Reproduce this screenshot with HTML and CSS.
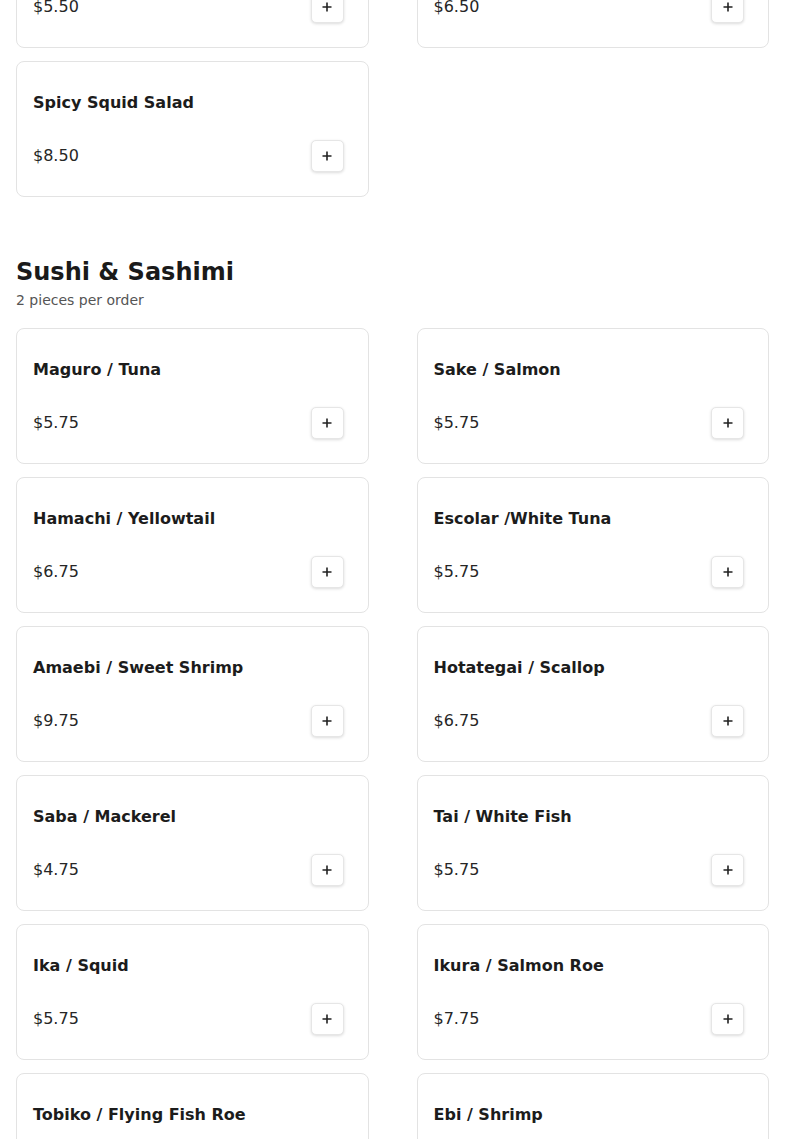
FILE: index.html
```html
<!DOCTYPE html>
<html>
<head>
<meta charset="utf-8">
<link rel="stylesheet" href="styles.css">
</head>
<body>
<main class="menu">
  <section class="section section-scrolled">
    <div class="grid">
      <div class="card"><div class="name">Seaweed Salad</div><div class="row"><span class="price">$5.50</span><button class="add"><svg viewBox="0 0 12 12" width="12" height="12"><path d="M6 1.5v9M1.5 6h9" stroke="#222" stroke-width="1.6" fill="none"/></svg></button></div></div>
      <div class="card"><div class="name">Sunomono Salad</div><div class="row"><span class="price">$6.50</span><button class="add"><svg viewBox="0 0 12 12" width="12" height="12"><path d="M6 1.5v9M1.5 6h9" stroke="#222" stroke-width="1.6" fill="none"/></svg></button></div></div>
      <div class="card"><div class="name">Spicy Squid Salad</div><div class="row"><span class="price">$8.50</span><button class="add"><svg viewBox="0 0 12 12" width="12" height="12"><path d="M6 1.5v9M1.5 6h9" stroke="#222" stroke-width="1.6" fill="none"/></svg></button></div></div>
    </div>
  </section>

  <section class="section">
    <h2 class="title">Sushi &amp; Sashimi</h2>
    <p class="subtitle">2 pieces per order</p>
    <div class="grid">
      <div class="card"><div class="name">Maguro / Tuna</div><div class="row"><span class="price">$5.75</span><button class="add"><svg viewBox="0 0 12 12" width="12" height="12"><path d="M6 1.5v9M1.5 6h9" stroke="#222" stroke-width="1.6" fill="none"/></svg></button></div></div>
      <div class="card"><div class="name">Sake / Salmon</div><div class="row"><span class="price">$5.75</span><button class="add"><svg viewBox="0 0 12 12" width="12" height="12"><path d="M6 1.5v9M1.5 6h9" stroke="#222" stroke-width="1.6" fill="none"/></svg></button></div></div>
      <div class="card"><div class="name">Hamachi / Yellowtail</div><div class="row"><span class="price">$6.75</span><button class="add"><svg viewBox="0 0 12 12" width="12" height="12"><path d="M6 1.5v9M1.5 6h9" stroke="#222" stroke-width="1.6" fill="none"/></svg></button></div></div>
      <div class="card"><div class="name">Escolar /White Tuna</div><div class="row"><span class="price">$5.75</span><button class="add"><svg viewBox="0 0 12 12" width="12" height="12"><path d="M6 1.5v9M1.5 6h9" stroke="#222" stroke-width="1.6" fill="none"/></svg></button></div></div>
      <div class="card"><div class="name">Amaebi / Sweet Shrimp</div><div class="row"><span class="price">$9.75</span><button class="add"><svg viewBox="0 0 12 12" width="12" height="12"><path d="M6 1.5v9M1.5 6h9" stroke="#222" stroke-width="1.6" fill="none"/></svg></button></div></div>
      <div class="card"><div class="name">Hotategai / Scallop</div><div class="row"><span class="price">$6.75</span><button class="add"><svg viewBox="0 0 12 12" width="12" height="12"><path d="M6 1.5v9M1.5 6h9" stroke="#222" stroke-width="1.6" fill="none"/></svg></button></div></div>
      <div class="card"><div class="name">Saba / Mackerel</div><div class="row"><span class="price">$4.75</span><button class="add"><svg viewBox="0 0 12 12" width="12" height="12"><path d="M6 1.5v9M1.5 6h9" stroke="#222" stroke-width="1.6" fill="none"/></svg></button></div></div>
      <div class="card"><div class="name">Tai / White Fish</div><div class="row"><span class="price">$5.75</span><button class="add"><svg viewBox="0 0 12 12" width="12" height="12"><path d="M6 1.5v9M1.5 6h9" stroke="#222" stroke-width="1.6" fill="none"/></svg></button></div></div>
      <div class="card"><div class="name">Ika / Squid</div><div class="row"><span class="price">$5.75</span><button class="add"><svg viewBox="0 0 12 12" width="12" height="12"><path d="M6 1.5v9M1.5 6h9" stroke="#222" stroke-width="1.6" fill="none"/></svg></button></div></div>
      <div class="card"><div class="name">Ikura / Salmon Roe</div><div class="row"><span class="price">$7.75</span><button class="add"><svg viewBox="0 0 12 12" width="12" height="12"><path d="M6 1.5v9M1.5 6h9" stroke="#222" stroke-width="1.6" fill="none"/></svg></button></div></div>
      <div class="card"><div class="name">Tobiko / Flying Fish Roe</div><div class="row"><span class="price">$6.75</span><button class="add"><svg viewBox="0 0 12 12" width="12" height="12"><path d="M6 1.5v9M1.5 6h9" stroke="#222" stroke-width="1.6" fill="none"/></svg></button></div></div>
      <div class="card"><div class="name">Ebi / Shrimp</div><div class="row"><span class="price">$5.75</span><button class="add"><svg viewBox="0 0 12 12" width="12" height="12"><path d="M6 1.5v9M1.5 6h9" stroke="#222" stroke-width="1.6" fill="none"/></svg></button></div></div>
    </div>
  </section>
</main>
</body>
</html>
```

FILE: styles.css
```css
html, body {
  margin: 0;
  padding: 0;
  background: #ffffff;
}
body {
  font-family: "DejaVu Sans", "Liberation Sans", sans-serif;
  color: #1f1f1f;
  overflow: hidden;
}
.menu {
  padding: 0 16px;
}
.section-scrolled {
  margin-top: -88px;
}
.section {
  margin-bottom: 61px;
}
.title {
  margin: 0;
  font-size: 24px;
  line-height: 28px;
  font-weight: bold;
  color: #1a1a1a;
}
.subtitle {
  margin: 4px 0 18px;
  font-size: 14px;
  line-height: 20px;
  color: #555555;
}
.grid {
  display: grid;
  grid-template-columns: 1fr 1fr;
  column-gap: 48px;
  row-gap: 13px;
}
.card {
  border: 1px solid #e3e3e3;
  border-radius: 8px;
  padding: 29px 24px 24px 16px;
  display: flex;
  flex-direction: column;
  gap: 25px;
  background: #fff;
}
.name {
  font-size: 16px;
  line-height: 24px;
  font-weight: bold;
  color: #1c1c1c;
}
.row {
  display: flex;
  align-items: center;
  justify-content: space-between;
  height: 32px;
}
.price {
  font-size: 16px;
  line-height: 24px;
  color: #262626;
}
.add {
  width: 33px;
  height: 32px;
  padding: 0;
  margin: 0;
  border: 1px solid #e6e6e6;
  border-radius: 5px;
  background: #fff;
  box-shadow: 0 1px 3px rgba(0, 0, 0, 0.14);
  display: flex;
  align-items: center;
  justify-content: center;
}
.add svg {
  display: block;
}
```
